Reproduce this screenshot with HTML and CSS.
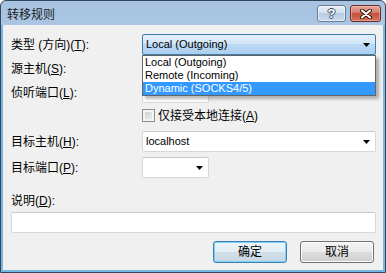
FILE: index.html
```html
<!DOCTYPE html>
<html lang="zh-CN">
<head>
<meta charset="utf-8">
<title>转移规则</title>
<link rel="stylesheet" href="styles.css">
</head>
<body>
<div class="window">
  <div class="titlebar">
    <span class="title">转移规则</span>
    <div class="caption-buttons">
      <div class="cap-btn help"><span>?</span></div>
      <div class="cap-btn close">
        <svg width="12" height="10" viewBox="0 0 12 10"><path d="M2 1.5 L10 8.5 M10 1.5 L2 8.5" stroke="#3b1510" stroke-width="4" stroke-linecap="round"/><path d="M2 1.5 L10 8.5 M10 1.5 L2 8.5" stroke="#ffffff" stroke-width="2" stroke-linecap="round"/></svg>
      </div>
    </div>
  </div>
  <div class="client">
    <div class="row">
      <label class="label">类型 (方向)(<u>T</u>):</label>
      <div class="field">
        <div class="combo focus">
          <span class="value">Local (Outgoing)</span>
          <svg class="arrow" width="7" height="4" viewBox="0 0 7 4"><polygon points="0,0 7,0 3.5,4" fill="#000"/></svg>
        </div>
        <ul class="dropdown">
          <li>Local (Outgoing)</li>
          <li>Remote (Incoming)</li>
          <li class="selected">Dynamic (SOCKS4/5)</li>
        </ul>
      </div>
    </div>
    <div class="row r2">
      <label class="label">源主机(<u>S</u>):</label>
      <div class="field"><div class="edit"></div></div>
    </div>
    <div class="row r3">
      <label class="label">侦听端口(<u>L</u>):</label>
      <div class="field"><div class="edit small"></div></div>
    </div>
    <div class="row r4">
      <span class="label"></span>
      <div class="checkrow"><span class="check"></span><span>仅接受本地连接(<u>A</u>)</span></div>
    </div>
    <div class="row r5">
      <label class="label">目标主机(<u>H</u>):</label>
      <div class="field">
        <div class="combo">
          <span class="value">localhost</span>
          <svg class="arrow" width="7" height="4" viewBox="0 0 7 4"><polygon points="0,0 7,0 3.5,4" fill="#000"/></svg>
        </div>
      </div>
    </div>
    <div class="row r6">
      <label class="label">目标端口(<u>P</u>):</label>
      <div class="field">
        <div class="combo small">
          <span class="value"></span>
          <svg class="arrow" width="7" height="4" viewBox="0 0 7 4"><polygon points="0,0 7,0 3.5,4" fill="#000"/></svg>
        </div>
      </div>
    </div>
    <div class="desc-label">说明(<u>D</u>):</div>
    <div class="edit wide"></div>
    <div class="buttons">
      <div class="btn default">确定</div>
      <div class="btn">取消</div>
    </div>
  </div>
</div>
</body>
</html>
```

FILE: styles.css
```css
* { box-sizing: border-box; }
html, body { margin: 0; padding: 0; }
body {
  width: 386px;
  height: 273px;
  overflow: hidden;
  background: #ffffff;
  font-family: "Liberation Sans", "Noto Sans CJK SC", sans-serif;
  font-size: 12px;
  color: #000;
}
u { text-decoration: underline; text-underline-offset: 1px; }

.window {
  width: 386px;
  height: 273px;
  border: 1px solid #33475c;
  border-radius: 6px 6px 0 0;
  background: linear-gradient(#a7c3e1, #b9d1ea 55%, #c4d9ef);
  display: flex;
  flex-direction: column;
  overflow: hidden;
}

.titlebar {
  height: 24px;
  flex: none;
  display: flex;
  align-items: flex-start;
  padding: 0 4px 0 6px;
}
.title {
  margin-top: 6px;
  font-family: "Noto Sans CJK SC", sans-serif;
  font-size: 12px;
  line-height: 14px;
  color: #1b1b1b;
}
.caption-buttons {
  margin-left: auto;
  margin-top: 4px;
  display: flex;
  gap: 4px;
}
.cap-btn {
  height: 17px;
  border-radius: 3px;
  display: flex;
  align-items: center;
  justify-content: center;
}
.cap-btn.help {
  width: 29px;
  border: 1px solid #6b7f98;
  background: linear-gradient(#e6eef8, #d3e1f1 45%, #b7cbe3 50%, #c9dbef);
  box-shadow: inset 0 0 0 1px rgba(255,255,255,0.5);
}
.cap-btn.help span {
  font-family: "Liberation Sans", sans-serif;
  font-weight: bold;
  font-size: 13px;
  line-height: 13px;
  color: #ffffff;
  text-shadow: 1px 0 0 #3d4b5c, -1px 0 0 #3d4b5c, 0 1px 0 #3d4b5c, 0 -1px 0 #3d4b5c;
}
.cap-btn.close {
  width: 31px;
  border: 1px solid #6b2a22;
  background: linear-gradient(#e5a99d, #d37a68 45%, #c4503c 50%, #d2735c);
  box-shadow: inset 0 0 0 1px rgba(255,210,200,0.45);
}

.client {
  flex: 1;
  background: #f0f0f0;
  border: 2px solid #77b6e3;
  border-top: 0;
  padding: 9px 7px 0 8px;
  display: flex;
  flex-direction: column;
}

.row {
  display: flex;
  align-items: center;
  height: 21px;
  flex: none;
}
.r2 { margin-top: 3px; }
.r3 { margin-top: 3px; }
.r4 { margin-top: 6px; height: 13px; }
.r5 { margin-top: 9px; }
.r6 { margin-top: 5px; }

.label {
  width: 131px;
  flex: none;
  line-height: 14px;
}
.field {
  position: relative;
  width: 234px;
  height: 21px;
}

.combo {
  height: 21px;
  width: 234px;
  border: 1px solid #d7d7d7;
  border-top-color: #c8c8c8;
  border-radius: 2px;
  background: #ffffff;
  display: flex;
  align-items: center;
  padding: 0 5px 0 3px;
}
.combo.small { width: 67px; }
.combo.focus {
  border-color: #3c7fb1;
  background: linear-gradient(#e2effb, #d1e5f7 50%, #bcd9f3 50%, #abd0f0);
}
.value {
  flex: 1;
  font-size: 11px;
  line-height: 13px;
  white-space: nowrap;
}
.arrow { flex: none; }

.edit {
  height: 21px;
  width: 234px;
  background: #ffffff;
  border: 1px solid #d7d7d7;
  border-top-color: #c8c8c8;
  border-radius: 2px;
}
.edit.small { width: 67px; }
.edit.wide { width: 365px; margin-top: 4px; flex: none; }

.dropdown {
  position: absolute;
  top: 21px;
  left: 0;
  width: 234px;
  margin: 0;
  padding: 0;
  list-style: none;
  background: #ffffff;
  border: 1px solid #646464;
  box-shadow: 3px 3px 3px rgba(0,0,0,0.28);
  z-index: 5;
}
.dropdown li {
  height: 13px;
  line-height: 13px;
  font-size: 11px;
  padding-left: 2px;
  white-space: nowrap;
}
.dropdown li.selected {
  background: #3399ff;
  color: #ffffff;
}

.checkrow {
  display: flex;
  align-items: center;
  gap: 3px;
  line-height: 14px;
}
.check {
  width: 13px;
  height: 13px;
  border: 1px solid #8e8f8f;
  background: linear-gradient(135deg, #c9cccf, #f3f3f3);
  box-shadow: inset 0 0 0 2px #f4f4f4;
}

.desc-label {
  margin-top: 16px;
  height: 14px;
  line-height: 14px;
  flex: none;
}

.buttons {
  margin-top: 8px;
  display: flex;
  justify-content: flex-end;
  gap: 13px;
  padding-right: 2px;
}
.btn {
  width: 74px;
  height: 22px;
  border: 1px solid #707070;
  border-radius: 3px;
  background: linear-gradient(#f2f2f2, #ebebeb 50%, #dddddd 50%, #cfcfcf);
  box-shadow: inset 0 0 0 1px #fbfbfb;
  display: flex;
  align-items: center;
  justify-content: center;
  line-height: 14px;
}
.btn.default {
  border-color: #3c7fb1;
  box-shadow: inset 0 0 0 1px #7fd1f7;
  background: linear-gradient(#eef5fa, #e3edf4 50%, #d2dfe9 50%, #c6d6e2);
}
```
